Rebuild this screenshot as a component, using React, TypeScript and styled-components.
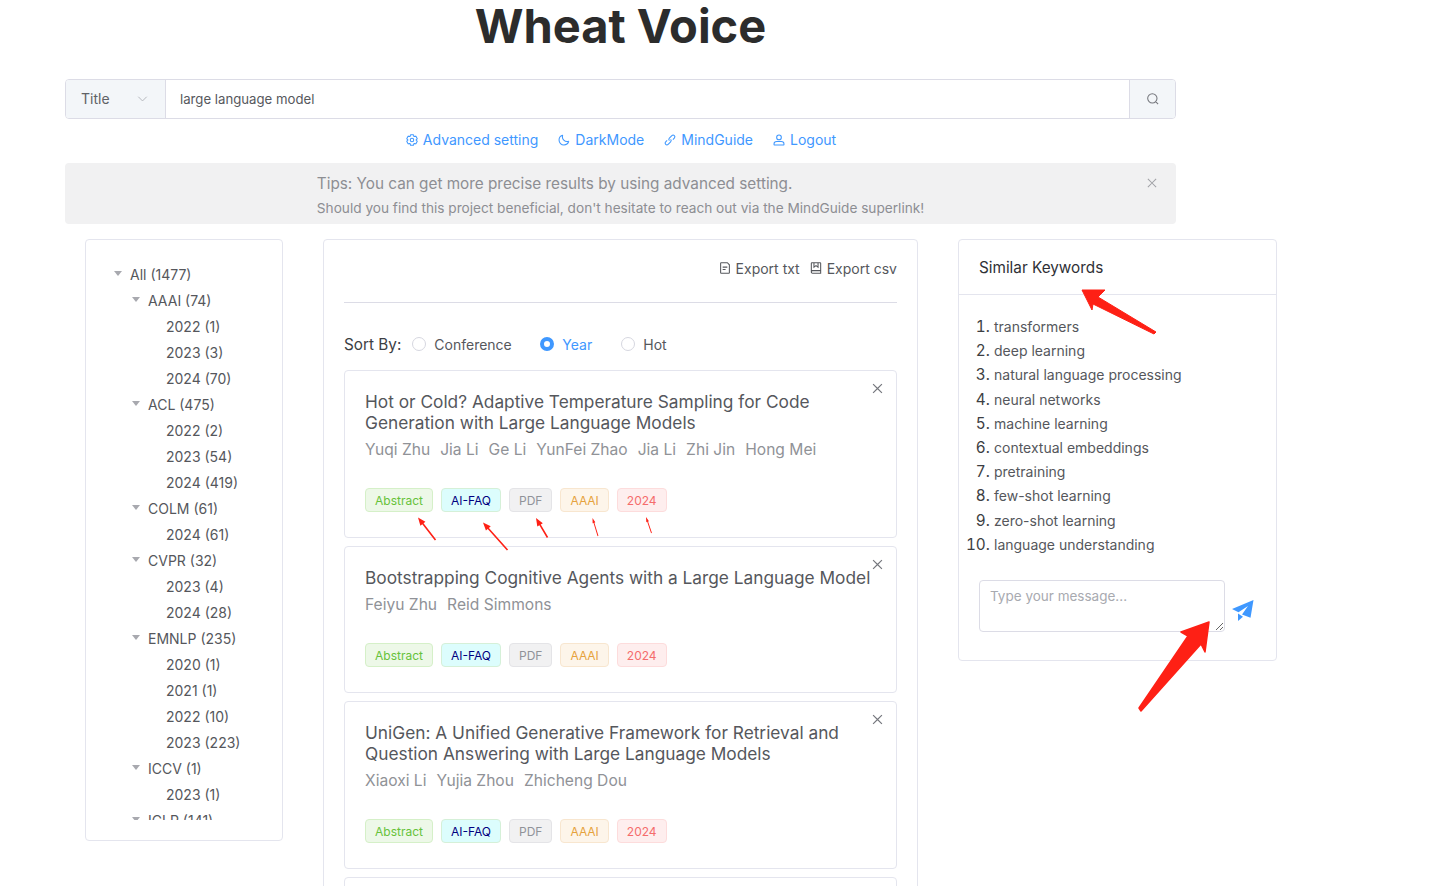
import React from "react";
import styled, { createGlobalStyle } from "styled-components";

const GlobalStyle = createGlobalStyle`
  html, body {
    margin: 0;
    padding: 0;
    background: #fff;
    overflow: hidden;
  }
  * {
    box-sizing: border-box;
  }
`;

type TreeNode = { label: string; children?: TreeNode[] };
type TagTone = "green" | "cyan" | "gray" | "orange" | "red";

const tree: TreeNode = {
  label: "All (1477)",
  children: [
    { label: "AAAI (74)", children: [{ label: "2022 (1)" }, { label: "2023 (3)" }, { label: "2024 (70)" }] },
    { label: "ACL (475)", children: [{ label: "2022 (2)" }, { label: "2023 (54)" }, { label: "2024 (419)" }] },
    { label: "COLM (61)", children: [{ label: "2024 (61)" }] },
    { label: "CVPR (32)", children: [{ label: "2023 (4)" }, { label: "2024 (28)" }] },
    {
      label: "EMNLP (235)",
      children: [{ label: "2020 (1)" }, { label: "2021 (1)" }, { label: "2022 (10)" }, { label: "2023 (223)" }],
    },
    { label: "ICCV (1)", children: [{ label: "2023 (1)" }] },
    { label: "ICLR (141)", children: [] },
  ],
};

const papers = [
  {
    title: "Hot or Cold? Adaptive Temperature Sampling for Code Generation with Large Language Models",
    authors: ["Yuqi Zhu", "Jia Li", "Ge Li", "YunFei Zhao", "Jia Li", "Zhi Jin", "Hong Mei"],
  },
  {
    title: "Bootstrapping Cognitive Agents with a Large Language Model",
    authors: ["Feiyu Zhu", "Reid Simmons"],
  },
  {
    title: "UniGen: A Unified Generative Framework for Retrieval and Question Answering with Large Language Models",
    authors: ["Xiaoxi Li", "Yujia Zhou", "Zhicheng Dou"],
  },
];

const tags: { label: string; tone: TagTone }[] = [
  { label: "Abstract", tone: "green" },
  { label: "AI-FAQ", tone: "cyan" },
  { label: "PDF", tone: "gray" },
  { label: "AAAI", tone: "orange" },
  { label: "2024", tone: "red" },
];

const keywords = [
  "transformers",
  "deep learning",
  "natural language processing",
  "neural networks",
  "machine learning",
  "contextual embeddings",
  "pretraining",
  "few-shot learning",
  "zero-shot learning",
  "language understanding",
];

const tagColors: Record<TagTone, { bg: string; border: string; color: string }> = {
  green: { bg: "#edf8e8", border: "#d5f0c8", color: "#67c23a" },
  cyan: { bg: "#dcfdfd", border: "#d5f0d8", color: "#000080" },
  gray: { bg: "#f1f1f2", border: "#e4e4e7", color: "#909399" },
  orange: { bg: "#fdf5ea", border: "#f8e6cf", color: "#e6a23c" },
  red: { bg: "#feeeee", border: "#fddcdc", color: "#f56c6c" },
};

const Icon = ({ d, size = 14, children }: { d?: string; size?: number; children?: React.ReactNode }) => (
  <svg
    width={size}
    height={size}
    viewBox="0 0 48 48"
    fill="none"
    stroke="currentColor"
    strokeWidth={3.6}
    style={{ flexShrink: 0 }}
  >
    {d && <path d={d} />}
    {children}
  </svg>
);

const GEAR =
  "M18.797 6.732A1 1 0 0 1 19.76 6h8.48a1 1 0 0 1 .964.732l1.285 4.628a1 1 0 0 0 1.213.7l4.651-1.2a1 1 0 0 1 1.116.468l4.24 7.344a1 1 0 0 1-.153 1.2L38.193 23.3a1 1 0 0 0 0 1.402l3.364 3.427a1 1 0 0 1 .153 1.2l-4.24 7.344a1 1 0 0 1-1.116.468l-4.65-1.2a1 1 0 0 0-1.214.7l-1.285 4.628a1 1 0 0 1-.964.732h-8.48a1 1 0 0 1-.963-.732L17.51 36.64a1 1 0 0 0-1.213-.7l-4.65 1.2a1 1 0 0 1-1.116-.468l-4.24-7.344a1 1 0 0 1 .153-1.2L9.809 24.7a1 1 0 0 0 0-1.402l-3.364-3.427a1 1 0 0 1-.153-1.2l4.24-7.344a1 1 0 0 1 1.116-.468l4.65 1.2a1 1 0 0 0 1.213-.7l1.286-4.628Z";
const MOON =
  "M39.979 29.241c.11-.344-.23-.654-.574-.544-1.53.487-3.162.75-4.855.75-8.834 0-15.997-7.163-15.997-15.997 0-1.693.263-3.324.75-4.855.11-.344-.2-.684-.544-.574C11.939 10.19 7 16.576 7 24.114 7 33.44 14.56 41 23.886 41c7.538 0 13.923-4.94 16.093-11.759Z";
const LINK =
  "M14.1 25.414l-4.95 4.95a6 6 0 0 0 8.486 8.485l8.485-8.485a6 6 0 0 0 0-8.485m7.779.707 4.95-4.95a6 6 0 1 0-8.486-8.485l-8.485 8.485a6 6 0 0 0 0 8.485";
const USER = "M7 37c0-4.97 4.03-8 9-8h16c4.97 0 9 3.03 9 8v3a1 1 0 0 1-1 1H8a1 1 0 0 1-1-1v-3Z";
const SEARCH =
  "M33.072 33.071c6.248-6.248 6.248-16.379 0-22.627-6.249-6.249-16.38-6.249-22.628 0-6.248 6.248-6.248 16.379 0 22.627 6.248 6.248 16.38 6.248 22.628 0Zm0 0 8.485 8.485";
const CLOSE = "M9.857 9.858 24 24m0 0 14.142 14.142M24 24 38.142 9.858M24 24 9.857 38.142";
const DOWN = "M39.6 17.443 24.043 33 8.487 17.443";
const FILE = "M16 21h16m-16 8h10m11 13H11a2 2 0 0 1-2-2V8a2 2 0 0 1 2-2h21l7 7v27a2 2 0 0 1-2 2Z";
const BOOK =
  "M8 36V8a2 2 0 0 1 2-2h28a2 2 0 0 1 2 2v34H12a4 4 0 0 1-4-4v-2Zm0 0a4 4 0 0 1 4-3h28M17 6v15l7-5 7 5V6";

const Page = styled.div`
  position: relative;
  width: 1431px;
  height: 886px;
  overflow: hidden;
  font-family: Inter, "Liberation Sans", sans-serif;
  color: #55575c;
`;

const Top = styled.header`
  width: 1111px;
  margin-left: 65px;
`;

const Title = styled.h1`
  margin: 0;
  height: 79px;
  font-size: 47px;
  line-height: 52px;
  font-weight: 700;
  text-align: center;
  color: #2c2c2c;
`;

const SearchBar = styled.div`
  display: flex;
  height: 40px;
  border: 1px solid #dcdce6;
  border-radius: 4px;
  overflow: hidden;
  font-size: 14px;
`;

const SelectBox = styled.div`
  width: 100px;
  display: flex;
  align-items: center;
  justify-content: space-between;
  padding: 0 16px 1px 15px;
  background: #f3f6f9;
  border-right: 1px solid #dcdce6;
  color: #606266;
`;

const Chevron = styled.span`
  display: flex;
  color: #b4b6bc;
`;

const SearchInput = styled.div`
  flex: 1;
  display: flex;
  align-items: center;
  padding: 0 0 1px 14px;
  font-size: 13.2px;
  color: #56585d;
`;

const SearchButton = styled.div`
  width: 46px;
  display: flex;
  align-items: center;
  justify-content: center;
  background: #f3f6f9;
  border-left: 1px solid #dcdce6;
  color: #75777d;
`;

const LinkRow = styled.nav`
  display: flex;
  justify-content: center;
  gap: 19px;
  margin-top: 10px;
  height: 22px;
`;

const TopLink = styled.a`
  display: flex;
  align-items: center;
  gap: 4px;
  font-size: 14px;
  line-height: 22px;
  color: #3f98ff;
`;

const Alert = styled.div`
  position: relative;
  display: flex;
  justify-content: center;
  align-items: center;
  height: 61px;
  margin-top: 12px;
  padding-top: 4px;
  background: #f1f1f2;
  border-radius: 4px;
  color: #8d8e93;
`;

const AlertMessage = styled.div`
  font-size: 15.3px;
  line-height: 24px;
`;

const AlertDescription = styled.div`
  font-size: 13.65px;
  line-height: 24px;
`;

const AlertClose = styled.span`
  position: absolute;
  top: 13px;
  right: 17px;
  display: flex;
  color: #a0a1a6;
`;

const Columns = styled.main`
  display: flex;
  align-items: flex-start;
  gap: 40px;
  margin: 15px 0 0 85px;
`;

const Panel = styled.section`
  background: #fff;
  border: 1px solid #e4e5ee;
  border-radius: 4px;
`;

const TreePanel = styled(Panel)`
  width: 198px;
  height: 602px;
  padding: 21px 0 20px 28px;
`;

const TreeScroll = styled.div`
  height: 559px;
  overflow: hidden;
  font-size: 14px;
`;

const TreeRow = styled.div<{ $depth: number }>`
  display: flex;
  align-items: center;
  height: 26px;
  padding-left: ${(p) => p.$depth * 18}px;
`;

const CaretSlot = styled.span`
  width: 16px;
  flex-shrink: 0;
`;

const Caret = styled.span`
  display: block;
  width: 0;
  height: 0;
  border-left: 4px solid transparent;
  border-right: 4px solid transparent;
  border-top: 5px solid #a8a9af;
  margin-bottom: 1px;
`;

const ResultPanel = styled(Panel)`
  width: 595px;
  padding: 0 20px;
  flex-shrink: 0;
`;

const ExportRow = styled.div`
  display: flex;
  justify-content: flex-end;
  align-items: center;
  gap: 9px;
  height: 63px;
  padding-bottom: 6px;
  border-bottom: 1px solid #dcdce6;
  font-size: 14px;
`;

const ExportItem = styled.span`
  display: flex;
  align-items: center;
  gap: 4px;
`;

const SortRow = styled.div`
  display: flex;
  align-items: center;
  height: 67px;
  padding-top: 15px;
`;

const SortLabel = styled.span`
  font-size: 15.3px;
  color: #3c3e43;
  margin-right: 11px;
`;

const RadioItem = styled.label<{ $checked?: boolean; $width: number }>`
  display: flex;
  align-items: center;
  gap: 8px;
  width: ${(p) => p.$width}px;
  padding-top: 1px;
  font-size: 14px;
  color: ${(p) => (p.$checked ? "#3f98ff" : "#55575c")};
`;

const RadioDot = styled.span<{ $checked?: boolean }>`
  width: 14px;
  height: 14px;
  border-radius: 50%;
  flex-shrink: 0;
  margin-top: -2px;
  background: #fff;
  border: ${(p) => (p.$checked ? "4px solid #3f98ff" : "1px solid #d6d7e0")};
`;

const CardList = styled.div`
  display: flex;
  flex-direction: column;
  gap: 8px;
`;

const Card = styled.article`
  position: relative;
  padding: 20px 20px 25px;
  border: 1px solid #e4e5ee;
  border-radius: 4px;
`;

const EmptyCard = styled(Card)`
  height: 160px;
`;

const CardTitle = styled.h3`
  margin: 0;
  font-size: 17.3px;
  line-height: 21px;
  font-weight: 400;
  color: #55575c;
`;

const Authors = styled.div`
  display: flex;
  gap: 10px;
  margin-top: 7px;
  font-size: 15.6px;
  line-height: 20px;
  color: #909297;
`;

const TagRow = styled.div`
  display: flex;
  gap: 8px;
  margin-top: 28px;
`;

const Tag = styled.span<{ $tone: TagTone }>`
  height: 24px;
  padding: 0 9px;
  display: flex;
  align-items: center;
  font-size: 12px;
  border-radius: 4px;
  background: ${(p) => tagColors[p.$tone].bg};
  border: 1px solid ${(p) => tagColors[p.$tone].border};
  color: ${(p) => tagColors[p.$tone].color};
`;

const CardClose = styled.span`
  position: absolute;
  top: 10px;
  right: 11px;
  display: flex;
  color: #75777d;
`;

const KeywordPanel = styled(Panel)`
  width: 319px;
  height: 422px;
  flex-shrink: 0;
`;

const KeywordHeader = styled.div`
  height: 55px;
  padding: 0 20px;
  display: flex;
  align-items: center;
  border-bottom: 1px solid #e4e5ee;
  font-size: 15.3px;
  color: #2f3136;
`;

const KeywordList = styled.ol`
  margin: 0;
  padding: 20px 0 0 35px;
  font-size: 15.3px;
  line-height: 24.2px;
  color: #3c3e43;
`;

const KeywordText = styled.span`
  font-size: 14px;
  line-height: 1;
  color: #55575c;
`;

const ChatRow = styled.div`
  display: flex;
  align-items: center;
  gap: 7px;
  margin: 23px 0 0 20px;
`;

const MessageBox = styled.textarea`
  width: 246px;
  height: 52px;
  padding: 5px 10px;
  border: 1px solid #dcdce6;
  border-radius: 4px;
  outline: none;
  font-family: inherit;
  font-size: 13.5px;
  line-height: 20px;
  color: #55575c;
  &::placeholder {
    color: #a8aab0;
  }
`;

const SendIcon = styled.svg`
  margin-top: 9px;
  flex-shrink: 0;
`;

const Overlay = styled.svg`
  position: absolute;
  inset: 0;
  pointer-events: none;
`;

const TreeBranch = ({ node, depth }: { node: TreeNode; depth: number }) => (
  <>
    <TreeRow $depth={depth}>
      <CaretSlot>{node.children && <Caret />}</CaretSlot>
      {node.label}
    </TreeRow>
    {node.children?.map((child) => (
      <TreeBranch key={node.label + child.label} node={child} depth={depth + 1} />
    ))}
  </>
);

// small arrows under the first card's tags
const thinArrows = [
  { tip: [418, 517.5], tail: [435.5, 540], head: 8, wing: 3.2, w: 1.6 },
  { tip: [483, 522.5], tail: [507.5, 550], head: 8, wing: 3.2, w: 1.6 },
  { tip: [536, 518], tail: [547.5, 537.5], head: 8, wing: 3.2, w: 1.6 },
  { tip: [592.5, 518], tail: [598, 536], head: 5, wing: 1.4, w: 0.9 },
  { tip: [646, 517], tail: [651.5, 533], head: 5, wing: 1.4, w: 0.9 },
];

const arrowPoints = (a: (typeof thinArrows)[number]) => {
  const dx = a.tail[0] - a.tip[0];
  const dy = a.tail[1] - a.tip[1];
  const len = Math.hypot(dx, dy);
  const ux = dx / len;
  const uy = dy / len;
  const bx = a.tip[0] + ux * a.head;
  const by = a.tip[1] + uy * a.head;
  const pts = [
    a.tip,
    [bx - uy * a.wing, by + ux * a.wing],
    [bx - (uy * a.w) / 2, by + (ux * a.w) / 2],
    [a.tail[0] - (uy * a.w) / 2, a.tail[1] + (ux * a.w) / 2],
    [a.tail[0] + (uy * a.w) / 2, a.tail[1] - (ux * a.w) / 2],
    [bx + (uy * a.w) / 2, by - (ux * a.w) / 2],
    [bx + uy * a.wing, by - ux * a.wing],
  ];
  return pts.map((p) => p.join(",")).join(" ");
};

const App = () => {
  return (
    <Page>
      <GlobalStyle />
      <Top>
        <Title>Wheat Voice</Title>
        <SearchBar>
          <SelectBox>
            Title
            <Chevron>
              <Icon d={DOWN} size={13} />
            </Chevron>
          </SelectBox>
          <SearchInput>large language model</SearchInput>
          <SearchButton>
            <Icon d={SEARCH} />
          </SearchButton>
        </SearchBar>
        <LinkRow>
          <TopLink>
            <Icon d={GEAR}>
              <path d="M30 24a6 6 0 1 1-12 0 6 6 0 0 1 12 0Z" />
            </Icon>
            Advanced setting
          </TopLink>
          <TopLink>
            <Icon d={MOON} />
            DarkMode
          </TopLink>
          <TopLink>
            <Icon d={LINK} />
            MindGuide
          </TopLink>
          <TopLink>
            <Icon d={USER}>
              <circle cx="24" cy="15" r="8" />
            </Icon>
            Logout
          </TopLink>
        </LinkRow>
        <Alert>
          <div>
            <AlertMessage>Tips: You can get more precise results by using advanced setting.</AlertMessage>
            <AlertDescription>
              Should you find this project beneficial, don't hesitate to reach out via the MindGuide superlink!
            </AlertDescription>
          </div>
          <AlertClose>
            <Icon d={CLOSE} />
          </AlertClose>
        </Alert>
      </Top>
      <Columns>
        <TreePanel>
          <TreeScroll>
            <TreeBranch node={tree} depth={0} />
          </TreeScroll>
        </TreePanel>
        <ResultPanel>
          <ExportRow>
            <ExportItem>
              <Icon d={FILE} />
              Export txt
            </ExportItem>
            <ExportItem>
              <Icon d={BOOK} />
              Export csv
            </ExportItem>
          </ExportRow>
          <SortRow>
            <SortLabel>Sort By:</SortLabel>
            <RadioItem $width={128}>
              <RadioDot />
              Conference
            </RadioItem>
            <RadioItem $checked $width={81}>
              <RadioDot $checked />
              Year
            </RadioItem>
            <RadioItem $width={60}>
              <RadioDot />
              Hot
            </RadioItem>
          </SortRow>
          <CardList>
            {papers.map((paper) => (
              <Card key={paper.title}>
                <CardClose>
                  <Icon d={CLOSE} size={15} />
                </CardClose>
                <CardTitle>{paper.title}</CardTitle>
                <Authors>
                  {paper.authors.map((author, i) => (
                    <span key={author + i}>{author}</span>
                  ))}
                </Authors>
                <TagRow>
                  {tags.map((tag) => (
                    <Tag key={tag.label} $tone={tag.tone}>
                      {tag.label}
                    </Tag>
                  ))}
                </TagRow>
              </Card>
            ))}
            <EmptyCard />
          </CardList>
        </ResultPanel>
        <KeywordPanel>
          <KeywordHeader>Similar Keywords</KeywordHeader>
          <KeywordList>
            {keywords.map((word) => (
              <li key={word}>
                <KeywordText>{word}</KeywordText>
              </li>
            ))}
          </KeywordList>
          <ChatRow>
            <MessageBox placeholder="Type your message..." />
            <SendIcon width="22" height="21" viewBox="0 0 22 21" fill="#3f98ff">
              <path d="M21.5 0 0 9l6.5 3.2L16 6l-6 8.5 8.5 3.3L21.5 0Z" />
              <path d="M6 13.5V21l5-4.2-5-3.3Z" />
            </SendIcon>
          </ChatRow>
        </KeywordPanel>
      </Columns>
      <Overlay width="1431" height="886" viewBox="0 0 1431 886" fill="#fe2015">
        <polygon
          points="1082,290 1105,290 1098,297 1156,332 1154,334 1093,304 1092,310"
          stroke="#fe2015"
          strokeWidth="1"
          strokeLinejoin="round"
        />
        <polygon
          points="1209,622 1181,632 1188,636 1139,708 1141,711 1201,644 1205,652"
          stroke="#fe2015"
          strokeWidth="1.5"
          strokeLinejoin="round"
        />
        {thinArrows.map((a) => (
          <polygon key={a.tip.join()} points={arrowPoints(a)} />
        ))}
      </Overlay>
    </Page>
  );
};

export default App;
